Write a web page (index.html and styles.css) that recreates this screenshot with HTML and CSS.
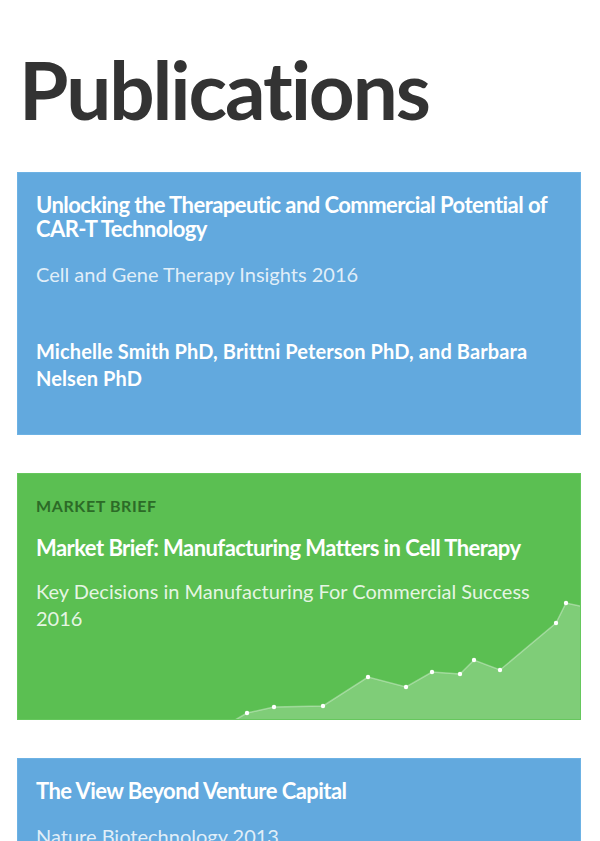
FILE: index.html
```html
<!DOCTYPE html>
<html lang="en">
<head>
<meta charset="utf-8">
<title>Publications</title>
<link rel="stylesheet" href="styles.css">
</head>
<body>
<main class="page">
  <h1 class="page-title">Publications</h1>
  <div class="cards">
    <article class="card card-blue">
      <h2 class="card-title">Unlocking the Therapeutic and Commercial Potential of CAR-T Technology</h2>
      <p class="card-sub">Cell and Gene Therapy Insights 2016</p>
      <p class="card-authors">Michelle Smith PhD, Brittni Peterson PhD, and Barbara Nelsen PhD</p>
    </article>
    <article class="card card-green">
      <svg class="chart" viewBox="0 0 564 130" width="564" height="130" aria-hidden="true">
        <polygon class="chart-area" points="219,131 231,124 258,118 307,117 352,88 390,98 416,83 444,85 458,71 484,81 540,34 550,14 564,17 564,131"/>
        <polyline class="chart-line" points="219,131 231,124 258,118 307,117 352,88 390,98 416,83 444,85 458,71 484,81 540,34 550,14 564,17"/>
        <g class="chart-dots">
          <circle cx="231" cy="124" r="2.2"/>
          <circle cx="258" cy="118" r="2.2"/>
          <circle cx="307" cy="117" r="2.2"/>
          <circle cx="352" cy="88" r="2.2"/>
          <circle cx="390" cy="98" r="2.2"/>
          <circle cx="416" cy="83" r="2.2"/>
          <circle cx="444" cy="85" r="2.2"/>
          <circle cx="458" cy="71" r="2.2"/>
          <circle cx="484" cy="81" r="2.2"/>
          <circle cx="540" cy="34" r="2.2"/>
          <circle cx="550" cy="14" r="2.2"/>
        </g>
      </svg>
      <p class="card-tag">MARKET BRIEF</p>
      <h2 class="card-title">Market Brief: Manufacturing Matters in Cell Therapy</h2>
      <p class="card-sub">Key Decisions in Manufacturing For Commercial Success 2016</p>
    </article>
    <article class="card card-blue">
      <h2 class="card-title">The View Beyond Venture Capital</h2>
      <p class="card-sub">Nature Biotechnology 2013</p>
      <p class="card-authors">Stephen Chang PhD</p>
    </article>
  </div>
</main>
</body>
</html>
```

FILE: styles.css
```css
html, body {
  margin: 0;
  padding: 0;
  background: #ffffff;
}

body {
  font-family: "Lato", "Open Sans", "Liberation Sans", sans-serif;
  color: #333333;
}

.page {
  padding: 49px 19px 0 17px;
}

.page-title {
  margin: 0 0 43px 2px;
  font-size: 80px;
  line-height: 80px;
  font-weight: 700;
  letter-spacing: -2.1px;
  color: #333333;
}

.cards {
  display: flex;
  flex-direction: column;
  gap: 38px;
}

.card {
  position: relative;
  overflow: hidden;
  border: 1px solid rgba(255, 255, 255, 0.18);
  padding: 20px 19px 42px 18px;
  color: #ffffff;
}

.card-blue {
  background: #62a9de;
  border-color: #6db2e4;
}

.card-green {
  background: #5bbf52;
  border-color: #66c75d;
  padding-bottom: 87px;
}

.card > * {
  position: relative;
}

.card-title {
  margin: 0;
  font-size: 22px;
  line-height: 24px;
  font-weight: 700;
  letter-spacing: -0.55px;
}

.card-sub {
  margin: 20px 0 0;
  font-size: 20px;
  line-height: 27px;
  font-weight: 400;
  color: rgba(255, 255, 255, 0.82);
}

.card-authors {
  margin: 50px 0 0;
  font-size: 20px;
  line-height: 27px;
  font-weight: 700;
  letter-spacing: 0.1px;
}

.card-tag {
  margin: 2px 0 20px;
  font-size: 16px;
  line-height: 20px;
  font-weight: 700;
  color: #2c6b27;
  letter-spacing: 0.6px;
}

.card-green .card-sub {
  margin-top: 18px;
  color: rgba(255, 255, 255, 0.86);
}

.card > .chart {
  position: absolute;
  right: 0;
  bottom: 0;
  display: block;
}

.chart-area {
  fill: rgba(255, 255, 255, 0.22);
}

.chart-line {
  fill: none;
  stroke: rgba(255, 255, 255, 0.35);
  stroke-width: 1.5;
}

.chart-dots circle {
  fill: #ffffff;
}
```
